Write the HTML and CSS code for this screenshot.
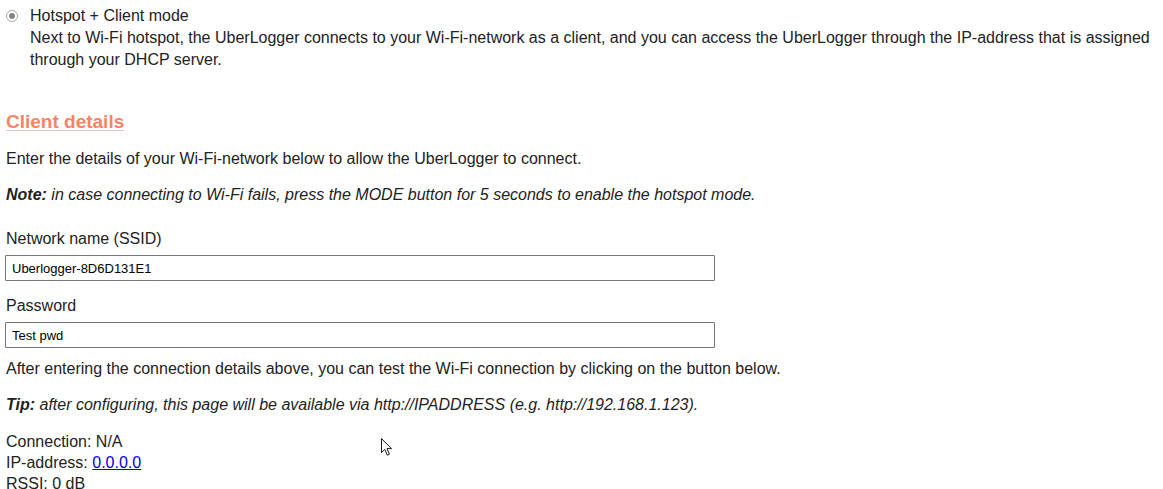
FILE: index.html
```html
<!DOCTYPE html>
<html>
<head>
<meta charset="utf-8">
<link rel="stylesheet" href="styles.css">
</head>
<body>
<div class="page">
  <div class="mode">
    <span class="radio" role="radio" aria-checked="true" aria-disabled="true"><span class="radio-dot"></span></span>
    <div class="mode-text">
      <div>Hotspot + Client mode</div>
      <div>Next to Wi-Fi hotspot, the UberLogger connects to your Wi-Fi-network as a client, and you can access the UberLogger through the IP-address that is assigned through your DHCP server.</div>
    </div>
  </div>

  <h3 class="title">Client details</h3>
  <p class="para">Enter the details of your Wi-Fi-network below to allow the UberLogger to connect.</p>
  <p class="para note"><b>Note:</b> in case connecting to Wi-Fi fails, press the MODE button for 5 seconds to enable the hotspot mode.</p>

  <label class="label first">Network name (SSID)</label>
  <input class="field" type="text" value="Uberlogger-8D6D131E1">
  <label class="label">Password</label>
  <input class="field" type="text" value="Test pwd">

  <p class="para after">After entering the connection details above, you can test the Wi-Fi connection by clicking on the button below.</p>
  <p class="para note"><b>Tip:</b> after configuring, this page will be available via http://IPADDRESS (e.g. http://192.168.1.123).</p>

  <div class="status">
    <div>Connection: N/A</div>
    <div>IP-address: <a href="#">0.0.0.0</a></div>
    <div>RSSI: 0 dB</div>
  </div>
</div>
<svg class="cursor" width="13" height="20" viewBox="0 0 13 20">
  <path d="M1.5 1.5 L1.5 15.5 L4.8 12.4 L7.3 18.2 L9.4 17.3 L7 11.6 L11.5 11.6 Z" fill="#fff" stroke="#1a1a1a" stroke-width="1" stroke-linejoin="miter"/>
</svg>
</body>
</html>
```

FILE: styles.css
```css
html, body {
  margin: 0;
  padding: 0;
  background: #fff;
}
body {
  font-family: "Liberation Sans", Arial, sans-serif;
  font-size: 16px;
  color: #222;
  position: relative;
}
.page {
  padding: 5px 0 0 6px;
}
.mode {
  display: flex;
  align-items: flex-start;
}
.radio {
  box-sizing: border-box;
  width: 12px;
  height: 12px;
  margin-top: 5px;
  flex: none;
  border: 1px solid #a9a9a9;
  border-radius: 50%;
  background: #fff;
  display: flex;
  align-items: center;
  justify-content: center;
}
.radio-dot {
  width: 6px;
  height: 6px;
  border-radius: 50%;
  background: #858585;
}
.mode-text {
  margin-left: 12px;
  line-height: 22px;
  padding-right: 10px;
}
.title {
  margin: 39px 0 0 0;
  font-size: 19px;
  line-height: 24px;
  font-weight: bold;
  color: #f48563;
  text-decoration: underline;
  text-decoration-color: #d9c4bf;
  text-underline-offset: 2px;
}
.para {
  margin: 14px 0 0 0;
  line-height: 22px;
}
.note {
  font-style: italic;
}
.label {
  display: block;
  line-height: 22px;
  margin-top: 14px;
}
.label.first {
  margin-top: 22px;
}
.field {
  display: block;
  box-sizing: border-box;
  width: 710px;
  height: 26px;
  margin: 5px 0 0 -1px;
  padding: 0 6px;
  border: 1px solid #767676;
  border-radius: 1px;
  font-family: "Liberation Sans", Arial, sans-serif;
  font-size: 13px;
  color: #000;
}
.para.after {
  margin-top: 10px;
}
.status {
  margin-top: 15px;
  line-height: 21px;
}
.status a {
  color: #0000ee;
}
.cursor {
  position: absolute;
  left: 380px;
  top: 437px;
}
```
